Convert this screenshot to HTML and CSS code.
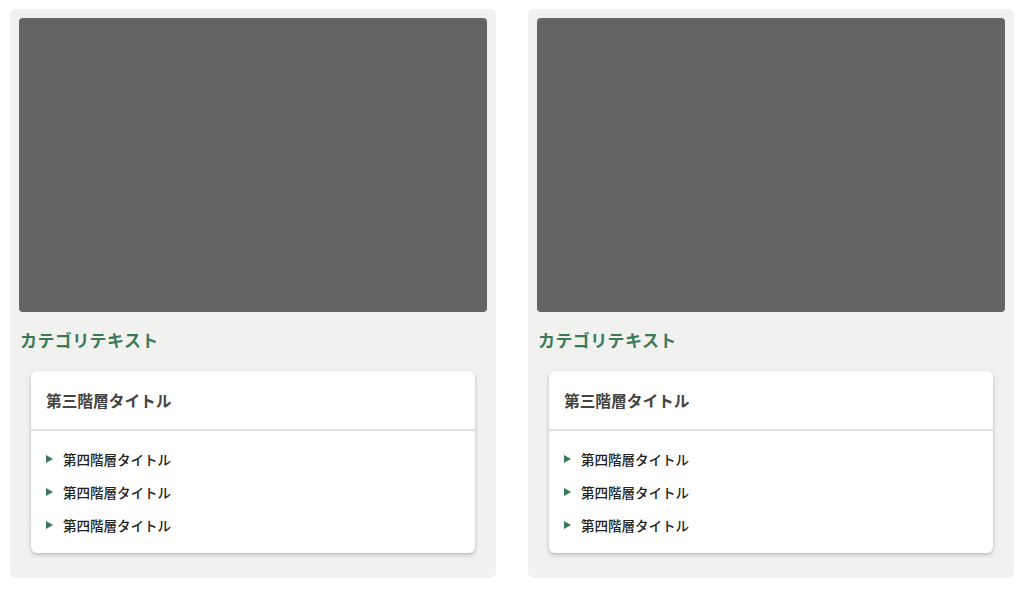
FILE: index.html
```html
<!DOCTYPE html>
<html lang="ja">
<head>
<meta charset="utf-8">
<link rel="stylesheet" href="styles.css">
</head>
<body>
<div class="grid">
  <div class="card">
    <div class="thumb"></div>
    <p class="category">カテゴリテキスト</p>
    <div class="box">
      <div class="box-head">第三階層タイトル</div>
      <ul class="list">
        <li class="item"><span class="tri"></span>第四階層タイトル</li>
        <li class="item"><span class="tri"></span>第四階層タイトル</li>
        <li class="item"><span class="tri"></span>第四階層タイトル</li>
      </ul>
    </div>
  </div>
  <div class="card">
    <div class="thumb"></div>
    <p class="category">カテゴリテキスト</p>
    <div class="box">
      <div class="box-head">第三階層タイトル</div>
      <ul class="list">
        <li class="item"><span class="tri"></span>第四階層タイトル</li>
        <li class="item"><span class="tri"></span>第四階層タイトル</li>
        <li class="item"><span class="tri"></span>第四階層タイトル</li>
      </ul>
    </div>
  </div>
</div>
</body>
</html>
```
FILE: styles.css
```css
* { box-sizing: border-box; }
html, body { margin: 0; background: #fff; }
body {
  padding: 9px 10px;
  font-family: "Noto Sans CJK JP", "Noto Sans", sans-serif;
}
.grid {
  display: flex;
  gap: 32px;
}
.card {
  flex: 1;
  background: #f1f2f0;
  border-radius: 6px;
  padding: 9px 9px 25px;
}
.thumb {
  height: 294px;
  background: #646464;
  border-radius: 4px;
}
.category {
  margin: 16px 0 19px 1px;
  font-size: 17px;
  line-height: 24px;
  letter-spacing: 0.4px;
  font-weight: 700;
  color: #3a7a58;
}
.box {
  margin: 0 12px;
  background: #fff;
  border-radius: 6px;
  box-shadow: 0 2px 4px rgba(0,0,0,0.22);
}
.box-head {
  padding: 18px 15px 17px;
  font-size: 15.7px;
  line-height: 23px;
  font-weight: 700;
  color: #444;
  border-bottom: 2px solid #e2e2e2;
}
.list {
  list-style: none;
  margin: 0;
  padding: 11px 15px 12px;
}
.item {
  display: flex;
  align-items: center;
  height: 33px;
  font-size: 13.5px;
  font-weight: 500;
  color: #222;
}
.tri {
  width: 0;
  height: 0;
  border-style: solid;
  border-width: 4px 0 4px 7px;
  border-color: transparent transparent transparent #3a7a58;
  margin-right: 10px;
}
```
